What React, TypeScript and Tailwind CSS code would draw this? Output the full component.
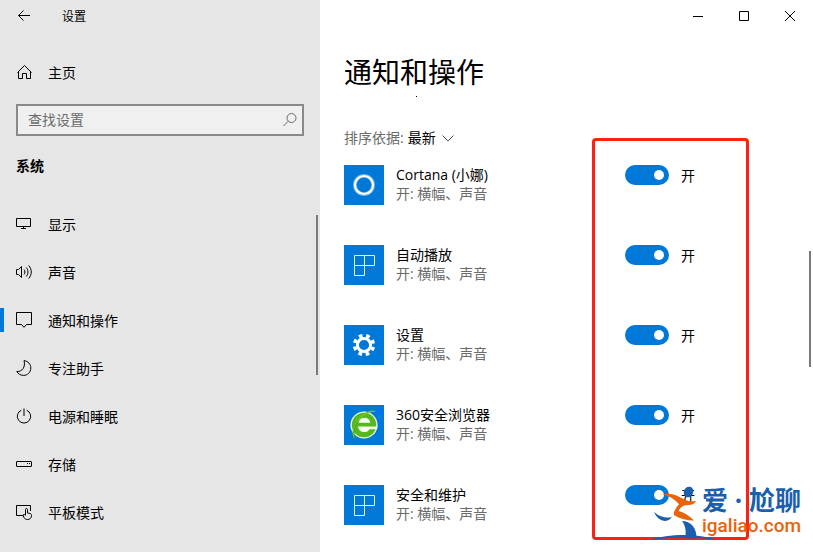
import { ReactNode, useState } from 'react';

interface NavItem {
  label: string;
  icon: ReactNode;
  active?: boolean;
}

interface AppItem {
  id: string;
  name: string;
  icon: ReactNode;
}

const LineIcon = ({ children, className = 'h-4 w-4' }: { children: ReactNode; className?: string }) => (
  <svg viewBox="0 0 16 16" className={className} fill="none" stroke="currentColor" strokeWidth="1" aria-hidden="true">
    {children}
  </svg>
);

const TileIcon = () => (
  <svg viewBox="0 0 40 40" className="h-10 w-10" fill="none" stroke="#e6f2fc" strokeWidth="1" aria-hidden="true">
    <path d="M10.500 10.500h20v10h-10v10h-10zM20.500 10.500v10M10.500 20.500h10" />
  </svg>
);

const CortanaIcon = () => (
  <svg viewBox="0 0 40 40" className="h-10 w-10" fill="none" aria-hidden="true">
    <circle cx="20" cy="20" r="9.200" stroke="#66b0ec" strokeWidth="3.800" />
    <circle cx="20" cy="20" r="9" stroke="#fff" strokeWidth="2.200" />
  </svg>
);

const GearIcon = () => (
  <svg viewBox="0 0 40 40" className="h-10 w-10" fill="none" stroke="#fff" aria-hidden="true">
    <circle cx="20" cy="20" r="6.600" strokeWidth="3" />
    <circle cx="20" cy="20" r="9.400" strokeWidth="3.600" strokeDasharray="3.7 3.683" strokeDashoffset="5.5" />
  </svg>
);

const BrowserIcon = () => (
  <svg viewBox="0 0 40 40" className="h-10 w-10" fill="none" aria-hidden="true">
    <circle cx="20" cy="20" r="13.600" fill="#e4f5dc" />
    <circle cx="20" cy="20" r="12.200" fill="#55b81f" />
    <path d="M14.500 17.800c.8-3.500 3-5 6-5s5.200 1.500 5.800 5z" fill="#f4fbef" />
    <path d="M14 21.400h19.400c-.1 1.100-.3 1.900-.6 2.800h-7.400c-1 1.900-2.700 2.900-4.900 2.900-3.600 0-6-2.200-6.500-5.700z" fill="#f4fbef" />
    <path d="M11.500 34C5.500 31 9.500 16 18 10 23.500 6 29.500 4.200 31.800 6.800 25 6.500 17.500 11 13.500 17.500 10 23.500 9 30 11.500 34z" fill="#6cc62c" />
    <path d="M11.500 34C8.500 27 11 20 14.500 16" stroke="#3c9a16" strokeWidth=".7" />
  </svg>
);

const navItems: NavItem[] = [
  {
    label: '显示',
    icon: (
      <LineIcon>
        <path d="M.5 2.500h14v8H.5zM7.500 10.500v2M5 12.500h5" />
      </LineIcon>
    ),
  },
  {
    label: '声音',
    icon: (
      <LineIcon>
        <path d="M.5 5.500h2l3-3v11l-3-3h-2zM8 5.500c1.200 1.500 1.200 3.500 0 5M10.300 3.500c2.200 2.600 2.200 6.400 0 9M12.700 1.500c3.400 3.800 3.400 9.200 0 13" />
      </LineIcon>
    ),
  },
  {
    label: '通知和操作',
    active: true,
    icon: (
      <LineIcon>
        <path d="M.5 .5h15v12h-5l-2.500 2.800-2.500-2.800h-5z" />
      </LineIcon>
    ),
  },
  {
    label: '专注助手',
    icon: (
      <LineIcon>
        <path d="M8 .6c4.200.6 6.800 3.600 6.800 7.400 0 4.200-3.200 7.400-7.200 7.400-3 0-5.500-1.500-6.800-3.900 5.300.4 9-4.500 7.200-10.900z" />
      </LineIcon>
    ),
  },
  {
    label: '电源和睡眠',
    icon: (
      <LineIcon>
        <path d="M8 .5v7.500M5.300 2.200a6.700 6.700 0 1 0 5.400 0" />
      </LineIcon>
    ),
  },
  {
    label: '存储',
    icon: (
      <LineIcon>
        <rect x=".5" y="5.500" width="15" height="5" rx=".5" />
        <path d="M11 7.500h1M13 7.500h1" />
      </LineIcon>
    ),
  },
  {
    label: '平板模式',
    icon: (
      <LineIcon>
        <path d="M7 11.500H.5v-10h14V7" />
        <path d="M9.500 11V5.500c0-1.300 2-1.300 2 0V9l2.500.5c1.200.3 1.500 1 1.500 2 0 2.500-1.500 4-4 4-1.800 0-3-.8-3.700-2.300L7 11c.6-.8 1.600-.8 2.500.5" />
      </LineIcon>
    ),
  },
];

const apps: AppItem[] = [
  { id: 'cortana', name: 'Cortana (小娜)', icon: <CortanaIcon /> },
  { id: 'autoplay', name: '自动播放', icon: <TileIcon /> },
  { id: 'settings', name: '设置', icon: <GearIcon /> },
  { id: 'browser', name: '360安全浏览器', icon: <BrowserIcon /> },
  { id: 'security', name: '安全和维护', icon: <TileIcon /> },
];

const Sidebar = () => (
  <aside className="relative w-80 shrink-0 bg-[#e6e6e6]">
    <header className="flex h-8 items-center">
      <button type="button" aria-label="返回" className="flex h-8 w-12 items-center justify-center">
        <LineIcon>
          <path d="M2.500 7.500H14M7.500 2.500l-5 5 5 5" />
        </LineIcon>
      </button>
      <span className="ml-3.5 pt-0.5 text-xs">设置</span>
    </header>

    <a href="#home" className="mt-4 flex h-12 items-center gap-4 pl-4">
      <LineIcon>
        <path d="M1.500 8.500L8.500 1.500l7 7M2.500 7.500v7h4v-5h4v5h4v-7" />
      </LineIcon>
      <span className="pt-0.5">主页</span>
    </a>

    <label className="mx-4 mt-2 flex h-8 items-center border-2 border-[#8a8a8a] bg-[#f0f0f0] pr-1 pl-2.5">
      <input
        type="text"
        aria-label="查找设置"
        placeholder="查找设置"
        className="min-w-0 flex-1 bg-transparent outline-none placeholder:text-[#6b6b6b]"
      />
      <LineIcon className="h-4 w-4 text-[#6b6b6b]">
        <circle cx="9.500" cy="6" r="4.500" />
        <path d="M6.300 9.200L1.500 14" />
      </LineIcon>
    </label>

    <h2 className="mt-5 pl-4 leading-5 font-bold">系统</h2>

    <nav className="mt-6">
      {navItems.map((item) => (
        <a key={item.label} href="#nav" className="flex h-12 items-center">
          <span className={item.active ? 'h-6 w-1 bg-[#0078d7]' : 'h-6 w-1'} />
          <span className="ml-3">{item.icon}</span>
          <span className="ml-4 pt-0.5">{item.label}</span>
        </a>
      ))}
    </nav>

    <div className="absolute top-[215px] right-0.5 h-40 w-0.5 bg-[#7a7a7a]" />
  </aside>
);

const AppRow = ({ app }: { app: AppItem }) => {
  const [on, setOn] = useState(true);

  return (
    <li className="flex h-20 items-start">
      <span className="h-10 w-10 shrink-0 bg-[#0078d7]">{app.icon}</span>
      <div className="ml-3 w-[229px] shrink-0 leading-5">
        <p>{app.name}</p>
        <p className="leading-[18px] text-[#6b6b6b]">开: 横幅、声音</p>
      </div>
      <label className="flex h-5 items-center gap-3">
        <input
          type="checkbox"
          role="switch"
          aria-label={app.name}
          checked={on}
          onChange={() => setOn(!on)}
          className="flex h-5 w-11 appearance-none items-center rounded-full bg-[#999999] px-[5px] before:h-2.5 before:w-2.5 before:rounded-full before:bg-white checked:justify-end checked:bg-[#0078d7]"
        />
        <span className="pt-0.5">{on ? '开' : '关'}</span>
      </label>
    </li>
  );
};

const Watermark = () => (
  <div className="absolute top-[482px] left-[328px] flex">
    <svg viewBox="0 0 54 62" className="h-[62px] w-[54px] overflow-visible" aria-hidden="true">
      <ellipse cx="40.500" cy="10" rx="4.600" ry="5.500" transform="rotate(25 40.500 10)" fill="#1a5fae" />
      <path d="M14.500 12.500c8-2.500 15 1 22 5 4 2 7.500 2 11.500 1.500-1 2.500-4 4-8 4-3.500 0-6 1-8 3.500l-1.500 2.500c5 1 10.500 4.500 15.500 9.500-6 .2-13-1.500-19.500-5-2-1.500 0-5.500 4.500-11.500-5-5-10-8.500-16.500-9.500z" fill="#e8630a" />
      <path d="M6 29.500c4 4.500 9.500 6.500 18 6-3 3-6.500 4-9.500 3-4-1.200-7-4.500-8.500-9z" fill="#1a5fae" />
      <path d="M34 39c8.500 0 15 7 14.500 17.500H37c1.500-7 .5-13-3-17.500z" fill="#1a5fae" />
      <path d="M2 58c18-6 46-7 68 0-22-3-44-3-68 0z" fill="#1a5fae" />
    </svg>
    <div className="flex flex-col pt-1">
      <span className="text-[26px] leading-7 font-bold text-[#1a5fae]">爱 · 尬聊</span>
      <span className="font-['Roboto',sans-serif] text-[19px] leading-6 font-medium text-[#e8630a]">igaliao.com</span>
    </div>
  </div>
);

export default function App() {
  return (
    <div className="flex min-h-screen bg-white font-['Open_Sans','Noto_Sans_CJK_SC',sans-serif] text-sm text-black">
      <Sidebar />

      <main className="relative min-w-0 flex-1 overflow-hidden">
        <div className="flex justify-end">
          <button type="button" aria-label="最小化" className="flex h-8 w-[46px] items-center justify-center">
            <LineIcon>
              <path d="M3 8.500h10" />
            </LineIcon>
          </button>
          <button type="button" aria-label="最大化" className="flex h-8 w-[46px] items-center justify-center">
            <LineIcon>
              <path d="M3.500 3.500h9v9h-9z" />
            </LineIcon>
          </button>
          <button type="button" aria-label="关闭" className="flex h-8 w-[46px] items-center justify-center">
            <LineIcon>
              <path d="M3 3l10 10M13 3L3 13" />
            </LineIcon>
          </button>
        </div>

        <div className="pl-6">
          <h1 className="mt-5 text-[28px] leading-10">通知和操作</h1>
          <div className="mt-1 ml-[72px] h-px w-px bg-black" />

          <button type="button" className="mt-[31px] flex h-5 items-center">
            <span className="text-[#6b6b6b]">排序依据:</span>
            <span className="ml-1">最新</span>
            <LineIcon className="ml-1 h-4 w-4 text-[#555555]">
              <path d="M2.500 5.500L8 11l5.500-5.500" />
            </LineIcon>
          </button>

          <ul className="mt-[17px]">
            {apps.map((app) => (
              <AppRow key={app.id} app={app} />
            ))}
          </ul>
        </div>

        <div className="absolute top-[251px] right-0.5 h-[116px] w-0.5 bg-[#7a7a7a]" />
        <div className="pointer-events-none absolute top-[138px] left-[272px] h-[402px] w-[157px] rounded border-3 border-[#ff1f14]" />
        <Watermark />
      </main>
    </div>
  );
}
